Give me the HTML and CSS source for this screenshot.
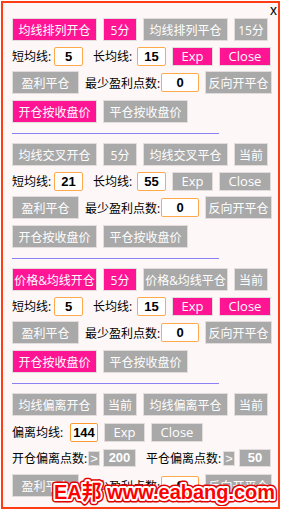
FILE: index.html
```html
<!DOCTYPE html>
<html lang="zh">
<head>
    <meta charset="UTF-8">
    <meta name="viewport" content="width=device-width, initial-scale=1.0">
    <title>EA 面板</title>
    <link rel="stylesheet" href="styles.css">
</head>
<body>
    <div class="panel">
        <div class="top-bar"><span class="close-x">x</span></div>

        <!-- 均线排列 -->
        <div class="group">
            <div class="row">
                <div class="btn btn-l on">均线排列开仓</div>
                <div class="btn btn-s on">5分</div>
                <div class="btn btn-l">均线排列平仓</div>
                <div class="btn btn-s">15分</div>
            </div>
            <div class="row row-input">
                <span class="lbl lbl-short">短均线:</span>
                <div class="num">5</div>
                <span class="lbl lbl-long">长均线:</span>
                <div class="num">15</div>
                <div class="btn btn-exp on">Exp</div>
                <div class="btn btn-close on">Close</div>
            </div>
            <div class="row">
                <div class="btn btn-m">盈利平仓</div>
                <span class="lbl lbl-min">最少盈利点数:</span>
                <div class="num num-wide">0</div>
                <div class="btn btn-m">反向开平仓</div>
            </div>
            <div class="row">
                <div class="btn btn-l on">开仓按收盘价</div>
                <div class="btn btn-l">平仓按收盘价</div>
            </div>
        </div>
        <div class="sep"></div>

        <!-- 均线交叉 -->
        <div class="group">
            <div class="row">
                <div class="btn btn-l">均线交叉开仓</div>
                <div class="btn btn-s">5分</div>
                <div class="btn btn-l">均线交叉平仓</div>
                <div class="btn btn-s">当前</div>
            </div>
            <div class="row row-input">
                <span class="lbl lbl-short">短均线:</span>
                <div class="num">21</div>
                <span class="lbl lbl-long">长均线:</span>
                <div class="num">55</div>
                <div class="btn btn-exp">Exp</div>
                <div class="btn btn-close">Close</div>
            </div>
            <div class="row">
                <div class="btn btn-m">盈利平仓</div>
                <span class="lbl lbl-min">最少盈利点数:</span>
                <div class="num num-wide">0</div>
                <div class="btn btn-m">反向开平仓</div>
            </div>
            <div class="row">
                <div class="btn btn-l">开仓按收盘价</div>
                <div class="btn btn-l">平仓按收盘价</div>
            </div>
        </div>
        <div class="sep"></div>

        <!-- 价格&均线 -->
        <div class="group">
            <div class="row">
                <div class="btn btn-l on">价格&amp;均线开仓</div>
                <div class="btn btn-s on">5分</div>
                <div class="btn btn-l">价格&amp;均线平仓</div>
                <div class="btn btn-s">当前</div>
            </div>
            <div class="row row-input">
                <span class="lbl lbl-short">短均线:</span>
                <div class="num">5</div>
                <span class="lbl lbl-long">长均线:</span>
                <div class="num">15</div>
                <div class="btn btn-exp on">Exp</div>
                <div class="btn btn-close on">Close</div>
            </div>
            <div class="row">
                <div class="btn btn-m">盈利平仓</div>
                <span class="lbl lbl-min">最少盈利点数:</span>
                <div class="num num-wide">0</div>
                <div class="btn btn-m">反向开平仓</div>
            </div>
            <div class="row">
                <div class="btn btn-l on">开仓按收盘价</div>
                <div class="btn btn-l">平仓按收盘价</div>
            </div>
        </div>
        <div class="sep"></div>

        <!-- 均线偏离 -->
        <div class="group group-dev">
            <div class="row">
                <div class="btn btn-l">均线偏离开仓</div>
                <div class="btn btn-s">当前</div>
                <div class="btn btn-l">均线偏离平仓</div>
                <div class="btn btn-s">当前</div>
            </div>
            <div class="row row-input">
                <span class="lbl lbl-dev">偏离均线:</span>
                <div class="num num-focus">144</div>
                <div class="btn btn-exp">Exp</div>
                <div class="btn btn-close">Close</div>
            </div>
            <div class="row row-points">
                <span class="lbl lbl-pts">开仓偏离点数:</span>
                <div class="val gt">&gt;</div>
                <div class="val">200</div>
                <span class="lbl lbl-pts second">平仓偏离点数:</span>
                <div class="val gt">&gt;</div>
                <div class="val val-narrow">50</div>
            </div>
            <div class="row">
                <div class="btn btn-m">盈利平仓</div>
                <span class="lbl lbl-min">最少盈利点数:</span>
                <div class="num num-wide">0</div>
                <div class="btn btn-m">反向开平仓</div>
            </div>
        </div>

        <svg class="watermark" width="230" height="30" viewBox="0 0 230 30">
            <text class="wm-outer" x="3" y="23" textLength="221" lengthAdjust="spacingAndGlyphs">EA邦 www.eabang.com</text>
            <text class="wm-inner" x="3" y="23" textLength="221" lengthAdjust="spacingAndGlyphs">EA邦 www.eabang.com</text>
        </svg>
    </div>
</body>
</html>
```

FILE: styles.css
```css
body {
    margin: 0;
    background-color: #ffffff;
    font-family: "Open Sans", "Noto Sans CJK SC", sans-serif;
    font-size: 12px;
    color: #000;
}
.panel {
    position: relative;
    box-sizing: border-box;
    width: 279px;
    height: 508px;
    margin: 1px 0 0 1px;
    border: 2px solid #ff3c14;
    background-color: #fdf8f7;
    padding-left: 9px;
}
.top-bar {
    height: 15px;
    display: flex;
    justify-content: flex-end;
    padding-right: 1px;
}
.close-x {
    font-family: "Liberation Sans", sans-serif;
    font-size: 14px;
    line-height: 14px;
}
.group {
    display: flex;
    flex-direction: column;
    gap: 6px;
}
.row {
    display: flex;
    align-items: center;
    gap: 6px;
    height: 23px;
}
.row-input {
    height: 18px;
}
.sep {
    width: 207px;
    height: 1px;
    background-color: #8a80f2;
    margin: 10px 0 9px;
}
.btn {
    box-sizing: border-box;
    height: 23px;
    display: flex;
    align-items: center;
    justify-content: center;
    white-space: nowrap;
    background-color: #a9a9a9;
    color: #ffffff;
    border: 1px solid #e2dcdc;
    font-size: 12px;
}
.btn.on {
    background-color: #ff1493;
}
.btn-l {
    width: 85px;
}
.btn-s {
    width: 34px;
}
.btn-m {
    width: 67px;
}
.btn-exp, .btn-close {
    height: 19px;
    font-size: 13px;
}
.btn-exp {
    width: 41px;
}
.btn-close {
    width: 52px;
}
.lbl {
    white-space: nowrap;
    font-size: 12px;
}
.lbl-short {
    width: 36px;
}
.lbl-long {
    width: 38px;
    padding-left: 4px;
}
.lbl-min {
    width: 70px;
}
.lbl-dev {
    width: 51px;
}
.lbl-pts {
    width: 71px;
}
.lbl-pts.second {
    margin-left: 10px;
    width: 72px;
}
.num {
    box-sizing: border-box;
    width: 29px;
    height: 19px;
    background-color: #ffffff;
    border: 1px solid #ffa94d;
    border-radius: 2px;
    font-family: "Liberation Sans", sans-serif;
    font-weight: bold;
    font-size: 13px;
    line-height: 17px;
    text-align: center;
}
.num-wide {
    width: 38px;
}
.num-focus {
    width: 28px;
    border-color: #ff9a2e;
    margin-left: 1px;
}
.group-dev .row-input {
    margin-top: 1px;
}
.row-points {
    gap: 0;
    height: 18px;
    margin-top: 2px;
}
.val {
    box-sizing: border-box;
    width: 33px;
    height: 18px;
    margin-left: 3px;
    background-color: #a9a9a9;
    border: 1px solid #e2dcdc;
    color: #ffffff;
    font-family: "Liberation Sans", sans-serif;
    font-weight: bold;
    font-size: 13px;
    line-height: 16px;
    text-align: center;
}
.val.gt {
    width: 12px;
    height: 15px;
    line-height: 13px;
    margin-left: 5px;
    font-weight: normal;
}
.val-narrow {
    width: 32px;
    margin-left: 4px;
}
.group-dev .row-points + .row {
    margin-top: 1px;
}
.watermark {
    position: absolute;
    left: 48px;
    top: 473px;
}
.watermark text {
    font-family: "Liberation Sans", "Noto Sans CJK SC", sans-serif;
    font-weight: bold;
    font-size: 21px;
}
.wm-outer {
    fill: #e00000;
    stroke: #e00000;
    stroke-width: 7px;
    stroke-linejoin: round;
}
.wm-inner {
    fill: #ff0000;
    stroke: #ffffff;
    stroke-width: 4px;
    stroke-linejoin: round;
    paint-order: stroke fill;
}
```
